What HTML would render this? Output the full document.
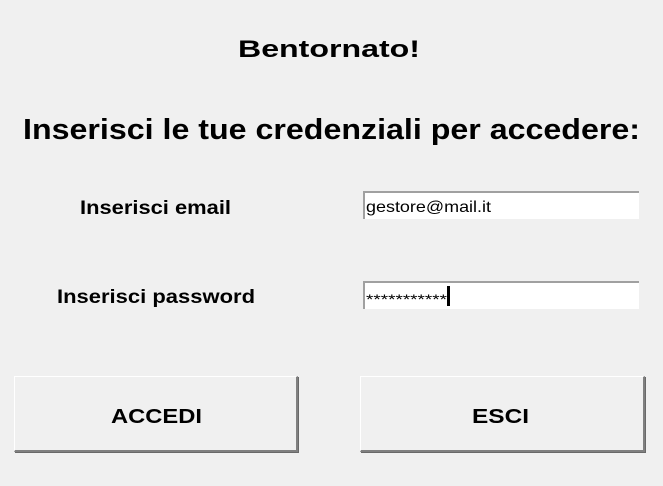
<!DOCTYPE html>
<html><head><style>
html,body{margin:0;padding:0;background:#f0f0f0;width:663px;height:486px;overflow:hidden}
.inp{position:absolute;background:#fff;border-top:2px solid #a0a0a0;border-left:2px solid #a0a0a0;box-sizing:border-box}
.btn{position:absolute;background:#f0f0f0;box-sizing:border-box;border-top:1px solid #fff;border-left:1px solid #fff;border-right:2px solid #808080;border-bottom:2px solid #808080;box-shadow:1px 1px 0 #696969}
svg{position:absolute;left:0;top:0}
</style></head><body>
<div class="inp" style="left:363px;top:191px;width:276px;height:28px"></div>
<div class="inp" style="left:363px;top:281px;width:276px;height:28px"></div>
<div style="position:absolute;left:447px;top:286px;width:3px;height:20px;background:#000"></div>
<div class="btn" style="left:14px;top:376px;width:284px;height:76px"></div>
<div class="btn" style="left:360px;top:376px;width:285px;height:76px"></div>
<svg width="663" height="486" font-family="Liberation Sans, Arial, sans-serif">
<text x="238" y="57" font-size="24" font-weight="bold" textLength="182" lengthAdjust="spacingAndGlyphs">Bentornato!</text>
<text x="23" y="139" font-size="29" font-weight="bold" textLength="617" lengthAdjust="spacingAndGlyphs">Inserisci le tue credenziali per accedere:</text>
<text x="80" y="214" font-size="19" font-weight="bold" textLength="151" lengthAdjust="spacingAndGlyphs">Inserisci email</text>
<text x="57" y="303" font-size="19" font-weight="bold" textLength="198" lengthAdjust="spacingAndGlyphs">Inserisci password</text>
<text x="366" y="212" font-size="16" textLength="125" lengthAdjust="spacingAndGlyphs">gestore@mail.it</text>
<text x="366" y="304" font-size="14" textLength="81" lengthAdjust="spacingAndGlyphs">***********</text>
<text x="111" y="423" font-size="20" font-weight="bold" textLength="91" lengthAdjust="spacingAndGlyphs">ACCEDI</text>
<text x="472" y="423" font-size="20" font-weight="bold" textLength="57" lengthAdjust="spacingAndGlyphs">ESCI</text>
</svg>
</body></html>
